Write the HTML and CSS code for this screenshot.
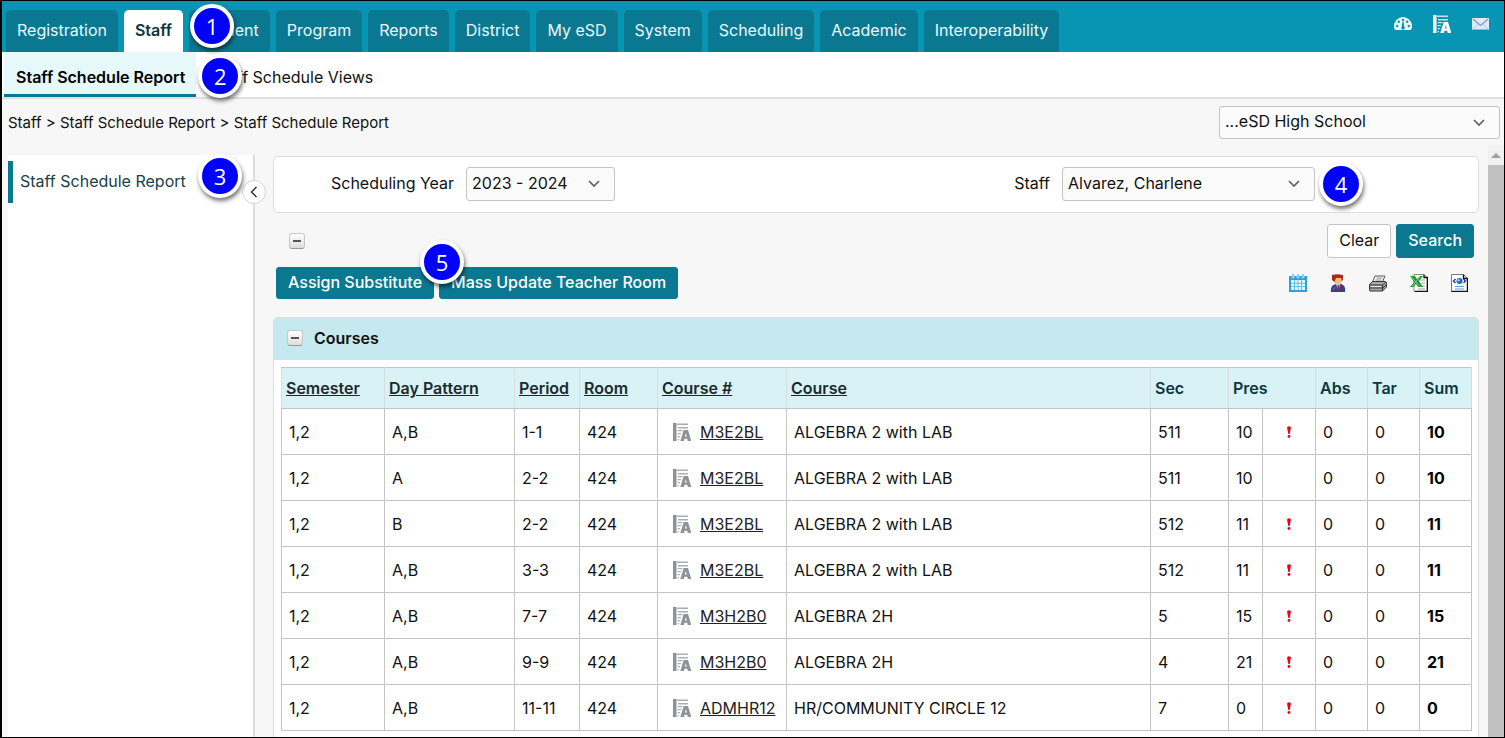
FILE: index.html
```html
<!DOCTYPE html>
<html lang="en">
<head>
  <meta charset="UTF-8" />
  <meta name="viewport" content="width=device-width, initial-scale=1.0"/>
  <title>Staff Schedule Report</title>
  <link rel="stylesheet" href="styles.css">
</head>
<body>
  <!-- shared icons -->
  <svg class="sprite" aria-hidden="true">
    <symbol id="gradebook" viewBox="0 0 18 18">
      <path d="M0 0h3.500v18H0z"/>
      <path d="M4 .5h11V2H4zM5 4h10v1.500H5zM4.500 7h5v1.300h-5zM4.500 10h3.500v1.300H4.500zM4.500 13H7v1.300H4.500zM4.500 16H6v1.300H4.500z" opacity=".75"/>
      <path fill-rule="evenodd" d="M10.700 7h4.300L18.300 18h-3.500l-.6-2.200h-2.700L10.900 18H7.300zM12.800 10.300l-.9 3.300h1.900z"/>
    </symbol>
    <symbol id="chevron" viewBox="0 0 12 8">
      <path d="M1 1l5 5 5-5" fill="none" stroke="#5a6268" stroke-width="1.700"/>
    </symbol>
    <symbol id="alert" viewBox="0 0 6 12">
      <path d="M1 1.500Q3-.8 5 1.500L3.700 8H2.300z"/><circle cx="3" cy="10.500" r="1.400"/>
    </symbol>
  </svg>

  <header class="topbar">
    <nav>
      <ul class="tabs">
        <li><a href="#">Registration</a></li>
        <li class="active"><a href="#">Staff</a></li>
        <li><a href="#">Student</a><span class="step step-1">1</span></li>
        <li><a href="#">Program</a></li>
        <li><a href="#">Reports</a></li>
        <li><a href="#">District</a></li>
        <li><a href="#">My eSD</a></li>
        <li><a href="#">System</a></li>
        <li><a href="#">Scheduling</a></li>
        <li><a href="#">Academic</a></li>
        <li><a href="#">Interoperability</a></li>
      </ul>
    </nav>
    <div class="shortcuts">
      <a href="#" aria-label="Dashboard">
        <svg width="18" height="14" viewBox="0 0 18 14"><path d="M1 13a9 9 0 0 1-1-4a9 9 0 0 1 18 0a9 9 0 0 1-1 4z" fill="#eef6f8"/><g fill="#0895b3"><circle cx="3.200" cy="9" r="1.200"/><circle cx="4.800" cy="4.800" r="1.200"/><circle cx="9" cy="3" r="1.200"/><circle cx="13.200" cy="4.800" r="1.200"/><circle cx="14.800" cy="9" r="1.200"/><path d="M8.400 4.800h1.200l.6 4.700a1.800 1.800 0 1 1-2.400 0z"/></g></svg>
      </a>
      <a href="#" aria-label="Gradebook"><svg width="18" height="18" fill="#fff"><use href="#gradebook"/></svg></a>
      <a href="#" aria-label="Messages">
        <svg width="17" height="12" viewBox="0 0 17 12"><path d="M0 0h17v12H0z" fill="#dfe9fb"/><path d="M1 11l5.500-5M16 11l-5.500-5" stroke="#b9c6ee" fill="none"/><path d="M1 1l7.500 6.500L16 1" stroke="#8294d4" stroke-width="1.200" fill="none"/><path d="M.5 11.500h16" stroke="#9fb0e4"/></svg>
      </a>
    </div>
  </header>

  <nav>
    <ul class="subnav">
      <li class="active"><a href="#">Staff Schedule Report</a></li>
      <li><a href="#">Staff Schedule Views</a><span class="step step-2">2</span></li>
    </ul>
  </nav>

  <div class="crumbs">
    <span>Staff &gt; Staff Schedule Report &gt; Staff Schedule Report</span>
    <div class="select school">
      <select aria-label="School"><option>...eSD High School</option></select>
      <svg width="12" height="8"><use href="#chevron"/></svg>
    </div>
  </div>

  <div class="layout">
    <aside class="sidebar">
      <a href="#">Staff Schedule Report<span class="step step-3">3</span></a>
      <button class="collapse" aria-label="Collapse menu">
        <svg width="8" height="12" viewBox="0 0 8 12"><path d="M6.500 1L1.500 6l5 5" fill="none" stroke="#333" stroke-width="1.500"/></svg>
      </button>
    </aside>

    <main class="content">
      <form class="filters">
        <div class="field">
          <label for="year">Scheduling Year</label>
          <div class="select year">
            <select id="year"><option>2023 - 2024</option></select>
            <svg width="12" height="8"><use href="#chevron"/></svg>
          </div>
        </div>
        <div class="field">
          <label for="staff">Staff</label>
          <div class="select staff">
            <select id="staff"><option>Alvarez, Charlene</option></select>
            <svg width="12" height="8"><use href="#chevron"/></svg>
            <span class="step step-4">4</span>
          </div>
        </div>
      </form>

      <div class="search-row">
        <button class="toggle" aria-label="Collapse filters"></button>
        <div class="search-buttons">
          <button class="btn plain">Clear</button>
          <button class="btn">Search</button>
        </div>
      </div>

      <div class="actions">
        <div class="action-buttons">
          <button class="btn">Assign Substitute</button>
          <button class="btn">Mass Update Teacher Room</button>
          <span class="step step-5">5</span>
        </div>
        <div class="tools">
          <a href="#" aria-label="Calendar">
            <svg width="18" height="18" viewBox="0 0 18 18"><path d="M0 2h18v16H0z" fill="#2f9fd8"/><path d="M3 0h2v4H3zM8 0h2v4H8zM13 0h2v4h-2z" fill="#5bb9e6" stroke="#fff" stroke-width=".5"/><path d="M2 6h14v10H2z" fill="#e8f7fd"/><path d="M2 9.300h14M2 12.600h14M5.500 6v10M9 6v10M12.500 6v10" stroke="#62bde6"/></svg>
          </a>
          <a href="#" aria-label="Student">
            <svg width="16" height="18" viewBox="0 0 16 18"><path d="M1 18q-1-7 5-8h5q5 1 4 8z" fill="#35418f"/><path d="M6 10h4l-1.500 7z" fill="#f0e3ee"/><path d="M7.500 11h1.500l.4 5-1 1.500-1-1.500z" fill="#a32638"/><path d="M4 4h8v3q-1 4-4 4T4 7z" fill="#f5bd83"/><path d="M2 1q5-1.500 11 0v5l-1.500 1V4H6L4.500 8 2 6z" fill="#b6251b"/><path d="M3 16l2-3" stroke="#6f7cc4"/></svg>
          </a>
          <a href="#" aria-label="Print">
            <svg width="18" height="17" viewBox="0 0 18 17"><path d="M6 1h10l-3 7H3z" fill="#fff" stroke="#555"/><path d="M7.500 3h6M6.500 5h6" stroke="#888"/><path d="M.5 9.500l3-3h13l1 1.500v4l-4 4H1l-.5-1z" fill="#aaa" stroke="#333"/><path d="M1 10h12.500L17 7M1 13h12.500l3.500-3M13.500 10v6" stroke="#333" fill="none"/><path d="M2 11.500h10" stroke="#eee"/></svg>
          </a>
          <a href="#" aria-label="Export to Excel">
            <svg width="18" height="18" viewBox="0 0 18 18"><path d="M4 .5h10l3 3v14H4z" fill="#fff" stroke="#8a8a7a"/><path d="M14 .5v3h3.500V17.500H5" fill="none" stroke="#111" stroke-width="1.300"/><path d="M10 6h5M12 9h3M11 12h4M8 15h7" stroke="#9aa58e"/><path d="M0 2h5l2 3 3-3h3L9 7l4 6H8l-2-3-3 3H0l4-5z" fill="#27963c"/><path d="M1 2.500l9 10M10.500 2.500L2 12" stroke="#9fdaa4" stroke-width=".7"/></svg>
          </a>
          <a href="#" aria-label="Export to web page">
            <svg width="17" height="18" viewBox="0 0 17 18"><path d="M.5.500h12l4 4v13H.5z" fill="#fff" stroke="#777"/><path d="M12.500.500v4h4V17.500H.5" fill="none" stroke="#111" stroke-width="1.400"/><circle cx="8.500" cy="7" r="3" fill="#2467b8"/><circle cx="7.700" cy="6.200" r="1.200" fill="#8fd0f2"/><path d="M4.500 5l-2 2 2 2M12.500 5l2 2-2 2" fill="none" stroke="#172c9a" stroke-width="1.300"/><path d="M4 12.500h9M4 15h9" stroke="#6d9be0"/></svg>
          </a>
        </div>
      </div>

      <section class="courses">
        <h2><button class="toggle" aria-label="Collapse courses"></button>Courses</h2>
        <table>
          <colgroup>
            <col class="c-sem"><col class="c-day"><col class="c-period"><col class="c-room">
            <col class="c-num"><col><col class="c-sec"><col class="c-pres"><col class="c-flag">
            <col class="c-count"><col class="c-count"><col class="c-count">
          </colgroup>
          <thead>
            <tr>
              <th><a href="#">Semester</a></th>
              <th><a href="#">Day Pattern</a></th>
              <th><a href="#">Period</a></th>
              <th><a href="#">Room</a></th>
              <th><a href="#">Course #</a></th>
              <th><a href="#">Course</a></th>
              <th>Sec</th>
              <th colspan="2">Pres</th>
              <th>Abs</th>
              <th>Tar</th>
              <th>Sum</th>
            </tr>
          </thead>
          <tbody id="rows"></tbody>
        </table>
      </section>
    </main>

    <div class="scrollbar" aria-hidden="true"><span class="arrow"></span><span class="thumb"></span></div>
  </div>

  <script>
    // semester, day pattern, period, room, course #, course, sec, pres, alert, abs, tar, sum
    const courses = [
      ['1,2', 'A,B', '1-1', '424', 'M3E2BL', 'ALGEBRA 2 with LAB', '511', 10, true, 0, 0, 10],
      ['1,2', 'A', '2-2', '424', 'M3E2BL', 'ALGEBRA 2 with LAB', '511', 10, false, 0, 0, 10],
      ['1,2', 'B', '2-2', '424', 'M3E2BL', 'ALGEBRA 2 with LAB', '512', 11, true, 0, 0, 11],
      ['1,2', 'A,B', '3-3', '424', 'M3E2BL', 'ALGEBRA 2 with LAB', '512', 11, true, 0, 0, 11],
      ['1,2', 'A,B', '7-7', '424', 'M3H2B0', 'ALGEBRA 2H', '5', 15, true, 0, 0, 15],
      ['1,2', 'A,B', '9-9', '424', 'M3H2B0', 'ALGEBRA 2H', '4', 21, true, 0, 0, 21],
      ['1,2', 'A,B', '11-11', '424', 'ADMHR12', 'HR/COMMUNITY CIRCLE 12', '7', 0, true, 0, 0, 0]
    ];

    const gradebook = '<svg width="18" height="18"><use href="#gradebook"/></svg>';
    const alertIcon = '<svg width="6" height="12"><use href="#alert"/></svg>';

    document.getElementById('rows').innerHTML = courses.map(row => {
      const cells = row.map((value, i) => {
        if (i === 4) return `<td><div class="course-num">${gradebook}<a href="#">${value}</a></div></td>`;
        if (i === 8) return `<td class="flag">${value ? alertIcon : ''}</td>`;
        if (i === 11) return `<td class="sum">${value}</td>`;
        return `<td>${value}</td>`;
      });
      return `<tr>${cells.join('')}</tr>`;
    }).join('');
  </script>
</body>
</html>
```
FILE: styles.css
```css
* {
  margin: 0;
  padding: 0;
  box-sizing: border-box;
}
body {
  display: flex;
  flex-direction: column;
  height: 100vh;
  overflow: hidden;
  border: 1px solid #000;
  border-left-width: 2px;
  background: #f7f7f7;
  color: #111;
  font: 16px/20px Inter, sans-serif;
}
a {
  color: inherit;
  text-decoration: none;
}
ul {
  list-style: none;
}
svg {
  display: block;
}
button, select {
  font: inherit;
  color: inherit;
  cursor: pointer;
}
.sprite {
  position: absolute;
  width: 0;
  height: 0;
}

/* numbered callouts */
.step {
  position: absolute;
  z-index: 10;
  width: 44px;
  height: 44px;
  border: 4px solid #fff;
  border-radius: 50%;
  background: #00f;
  box-shadow: 1px 3px 4px rgba(0,0,0,0.55);
  color: #fff;
  font: 22px/36px "Open Sans", sans-serif;
  text-align: center;
}
.step-1 { top: -6px; left: 1px; }
.step-2 { top: 2px; left: -2px; }
.step-3 { top: -7px; left: 185px; }
.step-4 { top: -5px; left: calc(100% + 4px); }
.step-5 { top: -27px; left: 144px; }

/* top navigation */
.topbar {
  display: flex;
  justify-content: space-between;
  align-items: flex-end;
  padding: 9px 15px 0 4px;
  background: #0895b3;
}
.tabs {
  display: flex;
  gap: 6px;
}
.tabs li, .subnav li {
  position: relative;
}
.tabs a {
  display: block;
  padding: 10px 11px 12px;
  border-radius: 5px 5px 0 0;
  background: #0b7892;
  color: #eaf8fb;
}
.tabs .active a {
  background: #fff;
  color: #0a3540;
  font-weight: 600;
}
.shortcuts {
  display: flex;
  align-items: center;
  gap: 21px;
  height: 18px;
  margin-bottom: 19px;
}

.subnav {
  display: flex;
  gap: 4px;
  padding: 0 2px;
  background: #fff;
  border-bottom: 2px solid #e0e0e0;
}
.subnav a {
  display: block;
  padding: 15px 11px 7px 12px;
  border-bottom: 3px solid transparent;
}
.subnav .active a {
  background: #e6f8fa;
  border-color: #0b7892;
  color: #000;
  font-weight: 600;
}

.crumbs {
  display: flex;
  justify-content: space-between;
  align-items: center;
  padding: 7px 4px 6px 6px;
  font-size: 15px;
}

/* drop-downs */
.select {
  position: relative;
  font-size: 16px;
}
.select select {
  width: 100%;
  height: 34px;
  padding: 0 5px 3px;
  appearance: none;
  border: 1px solid #c4c4c4;
  border-radius: 3px;
  background: #fbfbfb;
}
.select svg {
  position: absolute;
  top: 13px;
  right: 15px;
  pointer-events: none;
}
.school { width: 281px; }
.school select { height: 33px; }
.year { width: 149px; }
.staff { width: 253px; }

.layout {
  display: flex;
  flex: 1;
  min-height: 0;
}

.sidebar {
  position: relative;
  width: 247px;
  margin: 10px 0 0 6px;
  padding-top: 6px;
  background: #fff;
  border-right: 2px solid #ddd;
}
.sidebar a {
  position: relative;
  display: block;
  padding: 10px 7px 12px;
  border-left: 5px solid #0b7892;
  color: #17404b;
}
.collapse {
  position: absolute;
  z-index: 5;
  top: 25px;
  right: -13px;
  display: grid;
  place-items: center;
  width: 24px;
  height: 24px;
  border: 1px solid #d4d4d4;
  border-radius: 50%;
  background: #fff;
}

.content {
  flex: 1;
  min-width: 0;
  overflow: hidden;
  padding: 11px 9px 0 18px;
}
.filters {
  display: flex;
  justify-content: space-between;
  padding: 10px 163px 11px 57px;
  border: 1px solid #ddd;
  border-radius: 5px;
  background: #fff;
}
.field {
  display: flex;
  align-items: center;
  gap: 12px;
}
.field label {
  padding-bottom: 2px;
}

.btn {
  height: 32px;
  padding: 0 11px 2px;
  border: 1px solid #0b7892;
  border-radius: 3px;
  background: #0b7892;
  color: #fff;
  font-weight: 500;
}
.btn.plain {
  border-color: #c4c4c4;
  background: #fff;
  color: #111;
  font-weight: 400;
}
.search-row {
  display: flex;
  justify-content: space-between;
  align-items: center;
  padding: 11px 5px 9px 16px;
}
.search-row .btn {
  height: 34px;
}
.search-buttons, .action-buttons {
  position: relative;
  display: flex;
  gap: 5px;
}
.toggle {
  display: grid;
  place-items: center;
  width: 16px;
  height: 16px;
  border: 1px solid #c8c8c8;
  border-bottom-color: #999;
  border-radius: 3px;
  background: linear-gradient(#fff, #ddd);
}
.toggle::before {
  content: "";
  width: 8px;
  height: 2px;
  background: #555;
}
.actions {
  display: flex;
  justify-content: space-between;
  align-items: center;
  padding: 0 11px 18px 3px;
}
.tools {
  display: flex;
  align-items: center;
  gap: 23px;
}

/* courses table */
.courses {
  padding-bottom: 12px;
  border: 1px solid #ddd;
  border-radius: 5px 5px 0 0;
  background: #fff;
}
.courses h2 {
  display: flex;
  align-items: center;
  gap: 11px;
  padding: 10px 13px 12px;
  border-radius: 4px 4px 0 0;
  background: #c5e9ee;
  font-size: 16px;
  font-weight: 600;
}
table {
  width: calc(100% - 13px);
  margin: 7px 6px 0 7px;
  table-layout: fixed;
  border-collapse: collapse;
}
.c-sem { width: 103px; }
.c-day { width: 130px; }
.c-period { width: 65px; }
.c-room { width: 78px; }
.c-num { width: 129px; }
.c-sec { width: 78px; }
.c-pres { width: 34px; }
.c-flag { width: 53px; }
.c-count { width: 52px; }

th, td {
  border: 1px solid #c4c4c4;
  text-align: left;
  white-space: nowrap;
}
th {
  height: 41px;
  padding: 0 4px;
  border-left-color: #d5dfe0;
  border-right-color: #d5dfe0;
  background: #d8f2f5;
  color: #0d3640;
  font-weight: 600;
}
th a {
  color: #1c2a2d;
  text-decoration: underline;
}
td {
  height: 46px;
  padding: 0 7px;
}
.course-num {
  display: flex;
  align-items: center;
  gap: 9px;
  padding-left: 8px;
  color: #909396;
  fill: currentColor;
}
.course-num a {
  color: #222;
  text-decoration: underline;
}
.flag svg {
  margin: 0 auto;
  fill: #f00014;
}
.sum {
  color: #000;
  font-weight: 700;
}

.scrollbar {
  display: flex;
  flex-direction: column;
  width: 16px;
  background: #f1f1f1;
}
.arrow {
  height: 20px;
}
.arrow::before {
  content: "";
  display: block;
  margin: 8px auto 0;
  width: 0;
  border: 5px solid transparent;
  border-top-width: 0;
  border-bottom-color: #a0a0a0;
}
.thumb {
  flex: 1;
  background: #c1c1c1;
}
```
